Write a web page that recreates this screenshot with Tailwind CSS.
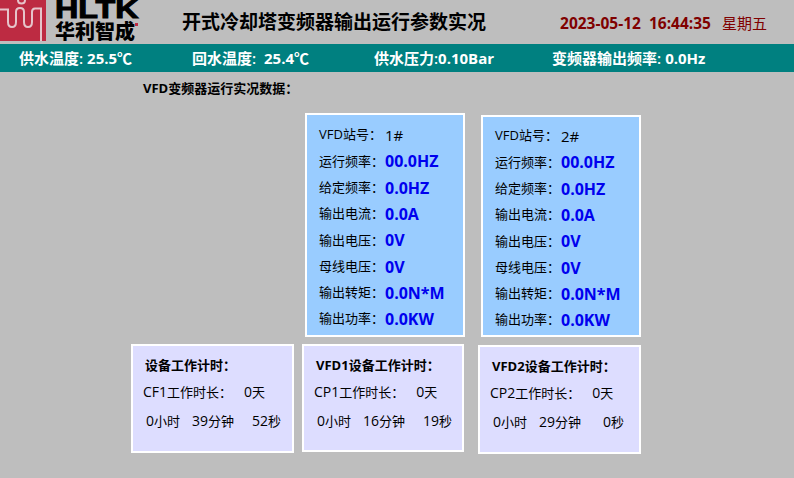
<!DOCTYPE html>
<html lang="zh-CN">
<head>
    <meta charset="UTF-8">
    <title>开式冷却塔变频器输出运行参数实况</title>
    <script src="https://cdn.jsdelivr.net/npm/@tailwindcss/browser@4"></script>
</head>
<body class="bg-[#bebebe] text-black w-[794px] h-[478px] overflow-hidden font-['Open_Sans','Noto_Sans_CJK_SC',sans-serif]">

    <!-- header -->
    <div class="flex h-[44px] items-start">
        <svg class="w-[46px] h-[41px] shrink-0" viewBox="0 0 46 41">
            <rect width="46" height="41" fill="#bd2b42"/>
            <path d="M0 9.5 H8 V22 Q8 27 12 27 Q16 27 16 22 V12 Q16 8 20 8 Q24 8 24 12 V22 Q24 27 28 27 Q32 27 32 22 V12 Q32 8.5 35 8.5 H41 V41" fill="none" stroke="#e6c4ca" stroke-width="2"/>
            <path d="M18 0 Q18 3.5 21.5 3.5 Q25 3.5 25 0" fill="none" stroke="#e6c4ca" stroke-width="2"/>
        </svg>
        <div class="relative w-[85px] ml-[9px] shrink-0">
            <div class="text-[26px] leading-[18px] h-[18px] font-bold font-['Liberation_Sans',sans-serif] origin-left scale-x-[1.24] [-webkit-text-stroke:1px_black]">HLTK</div>
            <div class="text-[20px] leading-[20px] font-black mt-[4px] whitespace-nowrap">华利智成</div>
            <span class="absolute left-[80px] top-[23px] w-[3px] h-[3px] bg-[#bd2b42]"></span>
        </div>
        <h1 class="ml-[42px] mt-[9px] text-[19px] leading-[26px] font-bold whitespace-nowrap">开式冷却塔变频器输出运行参数实况</h1>
        <div class="ml-[74px] mt-[10px] text-[15.5px] leading-[26px] font-bold text-[#800000] whitespace-nowrap">2023-05-12&nbsp; 16:44:35</div>
        <div class="ml-[11px] mt-[10px] text-[15px] leading-[26px] text-[#800000] whitespace-nowrap">星期五</div>
    </div>

    <!-- status bar -->
    <div class="h-[28px] bg-[#008080] text-white text-[15px] font-semibold leading-[28px] flex whitespace-nowrap">
        <div class="w-[173px] pl-[19px]">供水温度:<span class="ml-[4px] font-bold">25.5℃</span></div>
        <div class="w-[181px] pl-[19px]">回水温度: <span class="ml-[4px] font-bold">25.4℃</span></div>
        <div class="w-[178px] pl-[20px]">供水压力:<span class="font-bold">0.10Bar</span></div>
        <div class="pl-[20px]">变频器输出频率:<span class="ml-[4px] font-bold">0.0Hz</span></div>
    </div>

    <div class="pl-[143px] mt-[6px] text-[13px] leading-[20px] font-bold">VFD变频器运行实况数据：</div>

    <!-- VFD cards -->
    <div class="flex items-end pl-[305px] gap-[16px] mt-[15px]">
        <div class="w-[160px] h-[224px] bg-[#99ccff] border-2 border-white pl-[12px] pt-[7px] text-[13px]">
            <div class="grid grid-cols-[66px_1fr] auto-rows-[26.3px] items-center">
                <span>VFD站号：</span><span class="text-[15px]">1#</span>
                <span>运行频率：</span><span class="text-[16px] font-bold text-[#0000ee]">00.0HZ</span>
                <span>给定频率：</span><span class="text-[16px] font-bold text-[#0000ee]">0.0HZ</span>
                <span>输出电流：</span><span class="text-[16px] font-bold text-[#0000ee]">0.0A</span>
                <span>输出电压：</span><span class="text-[16px] font-bold text-[#0000ee]">0V</span>
                <span>母线电压：</span><span class="text-[16px] font-bold text-[#0000ee]">0V</span>
                <span>输出转矩：</span><span class="text-[16px] font-bold text-[#0000ee]">0.0N*M</span>
                <span>输出功率：</span><span class="text-[16px] font-bold text-[#0000ee]">0.0KW</span>
            </div>
        </div>
        <div class="w-[160px] h-[222px] bg-[#99ccff] border-2 border-white pl-[12px] pt-[6px] text-[13px]">
            <div class="grid grid-cols-[66px_1fr] auto-rows-[26.3px] items-center">
                <span>VFD站号：</span><span class="text-[15px]">2#</span>
                <span>运行频率：</span><span class="text-[16px] font-bold text-[#0000ee]">00.0HZ</span>
                <span>给定频率：</span><span class="text-[16px] font-bold text-[#0000ee]">0.0HZ</span>
                <span>输出电流：</span><span class="text-[16px] font-bold text-[#0000ee]">0.0A</span>
                <span>输出电压：</span><span class="text-[16px] font-bold text-[#0000ee]">0V</span>
                <span>母线电压：</span><span class="text-[16px] font-bold text-[#0000ee]">0V</span>
                <span>输出转矩：</span><span class="text-[16px] font-bold text-[#0000ee]">0.0N*M</span>
                <span>输出功率：</span><span class="text-[16px] font-bold text-[#0000ee]">0.0KW</span>
            </div>
        </div>
    </div>

    <!-- work time cards -->
    <div class="flex items-start pl-[131px] mt-[7px] text-[13px]">
        <div class="w-[163px] h-[109px] bg-[#ddddff] border-2 border-white whitespace-nowrap">
            <div class="pl-[12px] pt-[7px] font-bold leading-[24px]">设备工作计时：</div>
            <div class="pl-[10px] mt-[3px] leading-[24px]"><span class="text-[14px]">CF1</span>工作时长：<span class="ml-[12px] text-[14px]">0</span>天</div>
            <div class="pl-[13px] mt-[5px] leading-[24px] flex"><span class="w-[46px]"><span class="text-[14px]">0</span>小时</span><span class="w-[60px]"><span class="text-[14px]">39</span>分钟</span><span><span class="text-[14px]">52</span>秒</span></div>
        </div>
        <div class="ml-[8px] w-[162px] h-[108px] bg-[#ddddff] border-2 border-white whitespace-nowrap">
            <div class="pl-[12px] pt-[7px] font-bold leading-[24px]">VFD1设备工作计时：</div>
            <div class="pl-[10px] mt-[3px] leading-[24px]"><span class="text-[14px]">CP1</span>工作时长：<span class="ml-[12px] text-[14px]">0</span>天</div>
            <div class="pl-[13px] mt-[5px] leading-[24px] flex"><span class="w-[46px]"><span class="text-[14px]">0</span>小时</span><span class="w-[60px]"><span class="text-[14px]">16</span>分钟</span><span><span class="text-[14px]">19</span>秒</span></div>
        </div>
        <div class="ml-[14px] mt-[1px] w-[163px] h-[109px] bg-[#ddddff] border-2 border-white whitespace-nowrap">
            <div class="pl-[12px] pt-[7px] font-bold leading-[24px]">VFD2设备工作计时：</div>
            <div class="pl-[10px] mt-[3px] leading-[24px]"><span class="text-[14px]">CP2</span>工作时长：<span class="ml-[12px] text-[14px]">0</span>天</div>
            <div class="pl-[13px] mt-[5px] leading-[24px] flex"><span class="w-[46px]"><span class="text-[14px]">0</span>小时</span><span class="w-[64px]"><span class="text-[14px]">29</span>分钟</span><span><span class="text-[14px]">0</span>秒</span></div>
        </div>
    </div>
</body>
</html>
